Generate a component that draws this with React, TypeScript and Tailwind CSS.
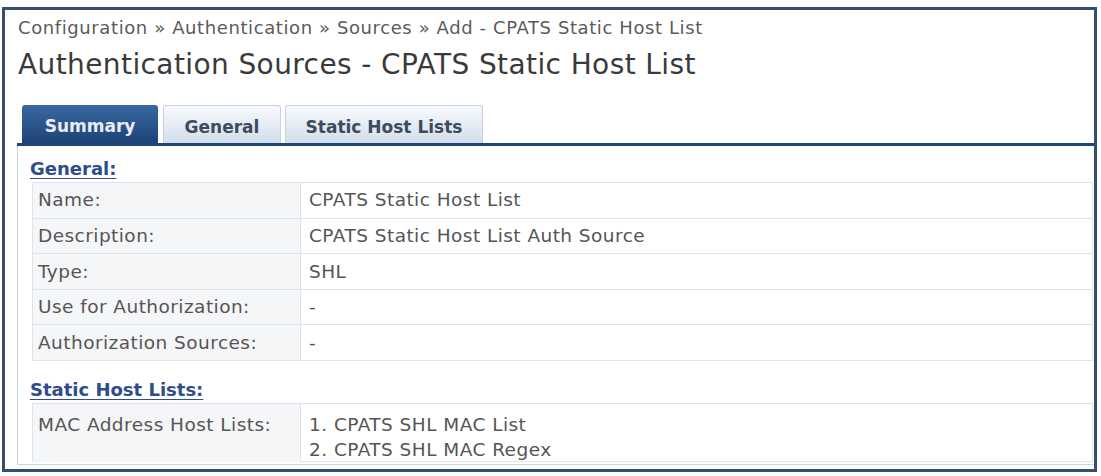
import React from 'react';

const generalRows: [string, string][] = [
  ['Name:', 'CPATS Static Host List'],
  ['Description:', 'CPATS Static Host List Auth Source'],
  ['Type:', 'SHL'],
  ['Use for Authorization:', '-'],
  ['Authorization Sources:', '-'],
];

const hostLists = ['1. CPATS SHL MAC List', '2. CPATS SHL MAC Regex'];

const SectionTitle: React.FC<{ children: React.ReactNode }> = ({ children }) => (
  <div className="text-[18px] leading-[22px] font-bold text-[#2f4c8c] underline underline-offset-[3px] decoration-[1px]">
    {children}
  </div>
);

const App: React.FC = () => {
  return (
    <div
      className="w-[1101px] h-[476px] bg-white pt-[7px] pl-[2px] overflow-hidden"
      style={{ fontFamily: '"DejaVu Sans", Verdana, sans-serif' }}
    >
      {/* Outer frame */}
      <div className="w-[1095px] h-[465px] border-[3px] border-[#34506e] overflow-hidden bg-white flex flex-col">
        {/* Breadcrumb + title */}
        <div className="pl-[13px] pt-[6px]">
          <div className="text-[18px] leading-[24px] tracking-[0.6px] text-[#5b5b5b] whitespace-nowrap">
            Configuration » Authentication » Sources » Add - CPATS Static Host List
          </div>
          <h1 className="mt-[7px] text-[28px] leading-[36px] tracking-[0.4px] text-[#3a3a3a] whitespace-nowrap">
            Authentication Sources - CPATS Static Host List
          </h1>
        </div>

        {/* Tabs */}
        <div className="mt-[22px] ml-[12px] flex items-end border-b-[3px] border-[#1f4576] h-[41px] pl-[5px]">
          <div className="w-[136px] h-[38px] pt-[6px] flex items-center justify-center rounded-t-[3px] bg-gradient-to-b from-[#3a68a2] to-[#1d4377] text-[17px] font-bold text-[#e9eef6]">
            Summary
          </div>
          <div className="ml-[5px] w-[118px] h-[38px] pt-[6px] flex items-center justify-center rounded-t-[3px] border border-b-0 border-[#c6d2df] bg-gradient-to-b from-[#f8fafd] to-[#d2deeb] text-[17px] font-bold text-[#3d4b5c]">
            General
          </div>
          <div className="ml-[4px] w-[198px] h-[38px] pt-[6px] flex items-center justify-center rounded-t-[3px] border border-b-0 border-[#c6d2df] bg-gradient-to-b from-[#f8fafd] to-[#d2deeb] text-[17px] font-bold text-[#3d4b5c]">
            Static Host Lists
          </div>
        </div>

        {/* Summary panel */}
        <div className="flex-1 ml-[12px] mb-[4px] border-l border-b border-[#cbd5e1] pl-[12px] pr-[1px] pt-[12px] text-[#555]">
          <SectionTitle>General:</SectionTitle>
          <div className="mt-[2px] ml-[2px] border-t border-l border-r border-[#dde3ea]">
            {generalRows.map(([label, value]) => (
              <div key={label} className="grid grid-cols-[268px_1fr] h-[35.6px] border-b border-[#dde3ea] text-[18.5px] tracking-[0.45px]">
                <div className="bg-[#f5f6f8] border-r border-[#dde3ea] pl-[5px] flex items-center whitespace-nowrap">
                  {label}
                </div>
                <div className="pl-[8px] flex items-center whitespace-nowrap">{value}</div>
              </div>
            ))}
          </div>

          <div className="mt-[18px]">
            <SectionTitle>Static Host Lists:</SectionTitle>
          </div>
          <div className="mt-[2px] ml-[2px] border border-[#dde3ea]">
            <div className="grid grid-cols-[268px_1fr] h-[57px] text-[18.5px] tracking-[0.45px] leading-[25px]">
              <div className="bg-[#f5f6f8] border-r border-[#dde3ea] pl-[5px] pt-[8px] whitespace-nowrap">
                MAC Address Host Lists:
              </div>
              <div className="pl-[8px] pt-[8px] whitespace-nowrap">
                {hostLists.map((h) => (
                  <div key={h}>{h}</div>
                ))}
              </div>
            </div>
          </div>
        </div>
      </div>
    </div>
  );
};

export default App;
